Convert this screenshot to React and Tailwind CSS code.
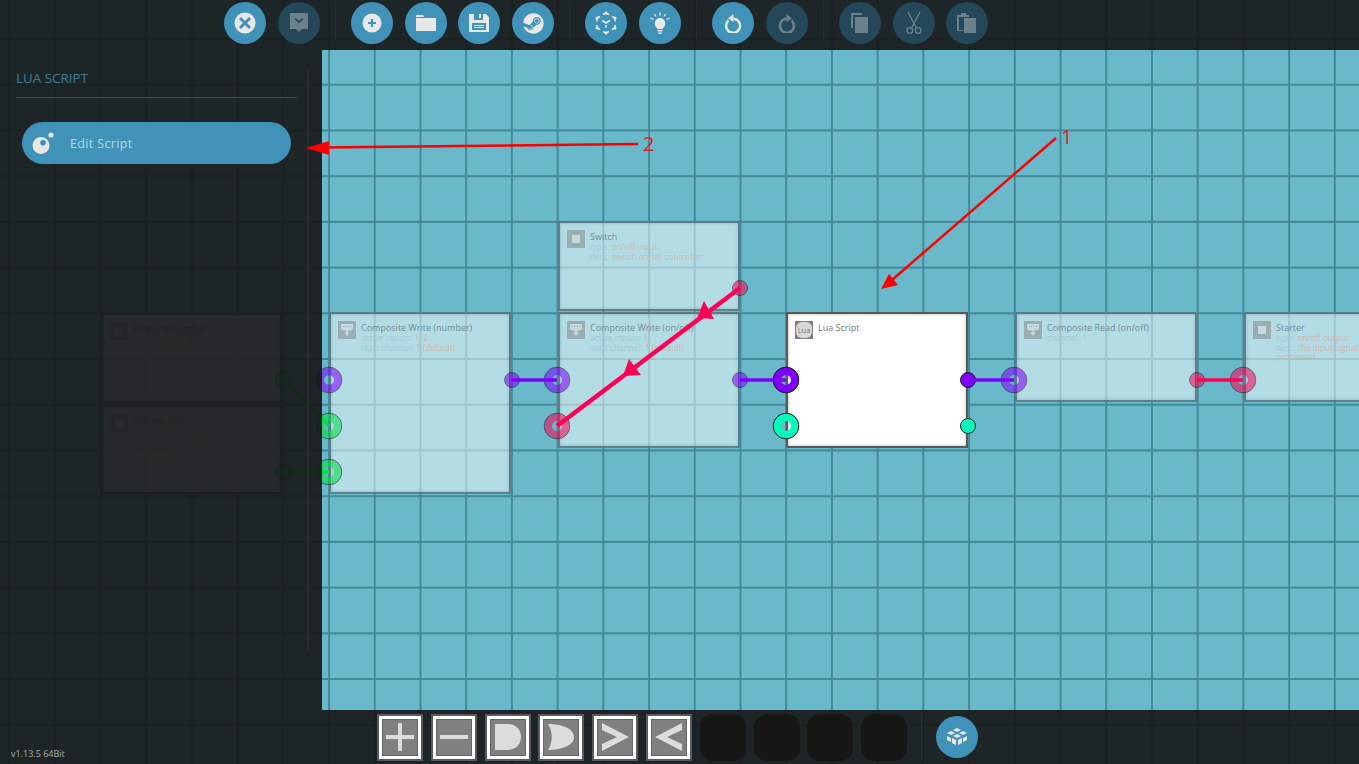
import { FaSteam } from 'react-icons/fa'

const PURPLE = '#7f00ff'
const PINK = '#ff0055'
const GREEN = '#00e040'
const TEAL = '#00ffbb'

const NODES = [
  { name: 'Property Number', box: 'left-[101px] top-[313px] w-[181px] h-[90px]', icon: 'square', lines: [['type:', 'number input'], ['value:', '0.000000']] },
  { name: 'Current RPS', box: 'left-[101px] top-[405px] w-[181px] h-[89px]', icon: 'square', lines: [['type:', 'number input'], ['desc:', 'the input signal to be'], ['', 'processed.']] },
  { name: 'Composite Write (number)', box: 'left-[329px] top-[312px] w-[182px] h-[182px]', icon: 'write', lines: [['active inputs:', '1, 2'], ['start channel:', '1 (default)']] },
  { name: 'Switch', box: 'left-[558px] top-[221px] w-[182px] h-[90px]', icon: 'square', lines: [['type:', 'on/off input'], ['desc:', 'switch on/off controller']] },
  { name: 'Composite Write (on/off)', box: 'left-[558px] top-[312px] w-[182px] h-[136px]', icon: 'write', lines: [['active inputs:', '1'], ['start channel:', '1 (default)']] },
  { name: 'Composite Read (on/off)', box: 'left-[1015px] top-[312px] w-[182px] h-[90px]', icon: 'read', lines: [['channel: 1', '']] },
  { name: 'Starter', box: 'left-[1244px] top-[312px] w-[182px] h-[90px]', icon: 'square', lines: [['type:', 'on/off output'], ['desc:', 'the input signal to be'], ['', 'processed.']] },
]

const DIM_PORTS = [
  [283, 380, GREEN, 'out'], [283, 472, GREEN, 'out'],
  [329, 380, PURPLE, 'in'], [329, 426, GREEN, 'in'], [329, 472, GREEN, 'in'], [512, 380, PURPLE, 'out'],
  [740, 288, PINK, 'out'],
  [557, 380, PURPLE, 'in'], [557, 426, PINK, 'in'], [740, 380, PURPLE, 'out'],
  [1014, 380, PURPLE, 'in'], [1197, 380, PINK, 'out'], [1243, 380, PINK, 'in'],
]

const LIVE_PORTS = [
  [786, 380, PURPLE, 'in'], [786, 426, TEAL, 'in'], [968, 380, PURPLE, 'out'], [968, 426, TEAL, 'out'],
]

const WIRES = [
  [283, 380, 329, 426, GREEN], [283, 472, 329, 472, GREEN],
  [512, 380, 557, 380, PURPLE], [740, 380, 786, 380, PURPLE], [968, 380, 1014, 380, PURPLE],
  [1197, 380, 1243, 380, PINK],
]

function NodeIcon({ kind }) {
  return (
    <div className="flex w-[18px] h-[18px] shrink-0 items-center justify-center bg-[#808080]">
      {kind === 'square' && <div className="w-[8px] h-[8px] bg-[#d8d8d8]" />}
      {kind !== 'square' && (
        <svg width="14" height="14" viewBox="0 0 14 14" fill="#d8d8d8">
          <path d="M1 1h12v5l-2 1.500H8v2h2l-3 3.500-3-3.500h2v-2H3L1 6z" />
          <path d="M3 3h1v1H3zM5 3h1v1H5zM8 3h1v1H8zM10 3h1v1h-1z" fill="#808080" />
        </svg>
      )}
    </div>
  )
}

function Node({ node }) {
  return (
    <div className={`absolute ${node.box} flex gap-[5px] overflow-hidden border-2 border-[#3a5a64]/70 bg-white/50 pl-[7px] pt-[7px] shadow-[inset_0_0_3px_rgba(40,70,80,0.3)]`}>
      <div className="opacity-50">
        <NodeIcon kind={node.icon} />
      </div>
      <div className="mt-[1px] whitespace-nowrap">
        <div className="text-[9px] leading-[11px] text-[#6f8f96]">{node.name}</div>
        {node.lines.map((line, i) => (
          <div key={i} className="text-[8.3px] leading-[9.500px] text-[#9fcbd4]">
            {line[0]} <span className="text-[#cdb9ae]">{line[1]}</span>
          </div>
        ))}
      </div>
    </div>
  )
}

function Port({ port }) {
  const [x, y, color, type] = port
  if (type === 'out') {
    return <circle cx={x} cy={y} r="7.5" fill={color} stroke="#1a1a1a" strokeWidth="1" />
  }
  return (
    <g>
      <circle cx={x} cy={y} r="9" fill="none" stroke={color} strokeWidth="8" />
      <circle cx={x} cy={y} r="12.8" fill="none" stroke="#1a1a1a" strokeWidth="1" />
    </g>
  )
}

function Canvas() {
  return (
    <div className="absolute inset-0 overflow-hidden bg-[#69b9ca] bg-[linear-gradient(to_right,#45899a_1.6px,transparent_1.6px),linear-gradient(to_bottom,#45899a_1.6px,transparent_1.6px)] bg-[size:45.72px_45.72px] bg-[position:8px_38px]">
      {NODES.map((node) => (
        <Node key={node.name} node={node} />
      ))}
      <div className="absolute left-[786px] top-[312px] flex h-[136px] w-[182px] gap-[5px] border-2 border-[#5a5a5a] bg-white pl-[7px] pt-[7px] text-[9px] leading-[11px] text-[#777] shadow-[inset_0_0_3px_rgba(0,0,0,0.35)]">
        <div className="flex h-[18px] w-[18px] items-center justify-center bg-[#808080]">
          <div className="flex h-[16px] w-[16px] items-center justify-center rounded-[6px] bg-[#d8d8d8] text-[7.500px] text-[#777]">Lua</div>
        </div>
        <div className="mt-[1px]">Lua Script</div>
      </div>
      <svg className="absolute inset-0" width="1359" height="764">
        <g opacity="0.55">
          {DIM_PORTS.map((p) => (
            <Port key={`${p[0]}-${p[1]}`} port={p} />
          ))}
        </g>
        {LIVE_PORTS.map((p) => (
          <Port key={`${p[0]}-${p[1]}`} port={p} />
        ))}
        {WIRES.map((w) => (
          <line key={`${w[0]}-${w[1]}`} x1={w[0]} y1={w[1]} x2={w[2]} y2={w[3]} stroke={w[4]} strokeWidth="3.500" />
        ))}
        <line x1="740" y1="288" x2="557" y2="426" stroke={PINK} strokeWidth="4.500" />
        <polygon points="697,318 714,319 704,301" fill={PINK} />
        <polygon points="623,376 641,375 629,359" fill={PINK} />
      </svg>
    </div>
  )
}

function Round({ dim, children }) {
  return (
    <div className={`flex h-[42px] w-[42px] shrink-0 items-center justify-center rounded-full ${dim ? 'bg-[#24485a] text-[#6d818a]' : 'bg-[#4192b8] text-[#e8e8e8]'}`}>
      {children}
    </div>
  )
}

const Sep = () => <div className="mx-[15px] h-[38px] w-px shrink-0 bg-[#2b2c2b]" />

function TopBar() {
  return (
    <div className="flex h-[50px] shrink-0 items-start bg-[#161515]/90 pl-[224px] pt-[2px]">
      <div className="flex gap-[11.800px]">
        <Round>
          <svg width="22" height="22" viewBox="0 0 22 22">
            <circle cx="11" cy="11" r="10.500" fill="currentColor" />
            <path d="M6 6l10 10M16 6L6 16" stroke="#4192b8" strokeWidth="3" />
          </svg>
        </Round>
        <Round dim>
          <svg width="20" height="22" viewBox="0 0 20 22" fill="currentColor">
            <path fillRule="evenodd" d="M1 1h18v16h-6l-3 3-3-3H1zM5.500 7l4.500 4.500L14.500 7l-1.500-1-3 3-3-3z" />
          </svg>
        </Round>
      </div>
      <Sep />
      <div className="flex gap-[11.800px]">
        <Round>
          <svg width="20" height="20" viewBox="0 0 20 20">
            <circle cx="10" cy="10" r="9.500" fill="currentColor" />
            <path d="M10 6v8M6 10h8" stroke="#4192b8" strokeWidth="2.200" />
          </svg>
        </Round>
        <Round>
          <svg width="20" height="18" viewBox="0 0 20 18" fill="currentColor">
            <path d="M0 1h7l1 2H0z" />
            <path d="M0 4h20v13H0z" />
          </svg>
        </Round>
        <Round>
          <svg width="20" height="20" viewBox="0 0 20 20" fill="currentColor">
            <path fillRule="evenodd" d="M0 1h17l3 3v15H0zM5 1v6h9V1h-2v4h-2V1zM3 10v7h14v-7zM5 12h10v1H5zM5 14h10v1H5z" />
          </svg>
        </Round>
        <Round>
          <FaSteam size={21} />
        </Round>
      </div>
      <Sep />
      <div className="flex gap-[11.800px]">
        <Round>
          <svg width="24" height="24" viewBox="0 0 24 24" fill="none" stroke="currentColor" strokeWidth="1.500">
            <path d="M9 3.500L12 2l3 1.500M18 5.500L21 7v3.500M21 14v3l-3 1.500M15 20.500L12 22l-3-1.500M6 18.500L3 17v-3M3 10.500V7l3-1.500" />
            <path d="M8 9.500l4 2.500 4-2.500M12 14v3" />
            <g fill="currentColor" stroke="none">
              <circle cx="12" cy="2" r="1.500" />
              <circle cx="21" cy="7" r="1.500" />
              <circle cx="21" cy="17" r="1.500" />
              <circle cx="12" cy="22" r="1.500" />
              <circle cx="3" cy="17" r="1.500" />
              <circle cx="3" cy="7" r="1.500" />
            </g>
          </svg>
        </Round>
        <Round>
          <svg width="24" height="24" viewBox="0 0 24 24" fill="currentColor" stroke="currentColor">
            <path d="M12 7a5.500 5.500 0 0 0-3.500 9.500c.6.6.8 1 .8 1.500h5.400c0-.5.2-.9.8-1.500A5.500 5.500 0 0 0 12 7z" strokeWidth="0" />
            <path d="M9.500 19.500h5M10 21h4M10.500 22.500h3" strokeWidth="1" fill="none" />
            <path d="M12 1.500v3M6.500 3l1.500 2.500M17.500 3L16 5.500M2.500 7l2.800 1.300M21.500 7l-2.800 1.300" strokeWidth="1.300" fill="none" />
          </svg>
        </Round>
      </div>
      <Sep />
      <div className="flex gap-[11.800px]">
        <Round>
          <svg width="18" height="20" viewBox="0 0 18 20" fill="none" stroke="currentColor" strokeWidth="2.500">
            <path d="M4.500 7.500a7 7 0 1 0 5-1.700" />
            <path d="M9.500 1L4 5.500l5.500 3.500z" fill="currentColor" stroke="none" />
          </svg>
        </Round>
        <Round dim>
          <svg width="18" height="20" viewBox="0 0 18 20" fill="none" stroke="currentColor" strokeWidth="2.500">
            <path d="M13.500 7.500a7 7 0 1 1-5-1.700" />
            <path d="M8.500 1L14 5.500 8.500 9z" fill="currentColor" stroke="none" />
          </svg>
        </Round>
      </div>
      <Sep />
      <div className="flex gap-[11.800px]">
        <Round dim>
          <svg width="18" height="20" viewBox="0 0 18 20" fill="currentColor">
            <path d="M0 0h11v2H2v13H0z" />
            <path d="M4 4h13v16H4z" />
          </svg>
        </Round>
        <Round dim>
          <svg width="16" height="24" viewBox="0 0 16 24" fill="none" stroke="currentColor" strokeWidth="1.300">
            <path d="M2 1l8.200 15.500M14 1L5.800 16.500" />
            <circle cx="3.800" cy="19.500" r="2.800" />
            <circle cx="12.200" cy="19.500" r="2.800" />
          </svg>
        </Round>
        <Round dim>
          <svg width="20" height="22" viewBox="0 0 20 22" fill="currentColor">
            <path fillRule="evenodd" d="M0 3h4V1h5v2h3v2H2v13h4v1H0z" />
            <path d="M7 6h12v15H7z" />
          </svg>
        </Round>
      </div>
    </div>
  )
}

function SidePanel() {
  return (
    <aside className="relative w-[322px] shrink-0 bg-[#161515]/90 pl-[16px] pt-[21px]">
      <div className="w-[281px] border-b border-[#454a4b] pb-[11px] text-[13.400px] leading-[15px] text-[#3c7c97]">LUA SCRIPT</div>
      <div className="ml-[6px] mt-[24px] flex h-[42px] w-[269px] items-center rounded-full bg-[#4192b8] pl-[9px] text-[12.500px] tracking-[0.35px] text-[#b7d6e4]">
        <svg width="24" height="24" viewBox="0 0 24 24" fill="#e8e8e8">
          <path fillRule="evenodd" d="M10 6a8.500 8.500 0 1 1 0 17 8.500 8.500 0 0 1 0-17zM12 9a2.800 2.800 0 1 0 0 5.600A2.800 2.800 0 0 0 12 9z" />
          <circle cx="20" cy="4" r="2.600" />
        </svg>
        <span className="ml-[15px] mt-[2px]">Edit Script</span>
      </div>
      <div className="absolute left-[307px] top-[20px] h-[580px] w-[2px] bg-[#2c2a28]" />
    </aside>
  )
}

function ChipButton({ children }) {
  return (
    <div className="h-[47px] w-[46px] shrink-0 border-2 border-[#5a5a5a] bg-white p-[3px]">
      <div className="flex h-full w-full items-center justify-center border border-[#666] bg-[#808080]">
        <svg width="32" height="32" viewBox="0 0 32 32" fill="#dcdcdc">
          {children}
        </svg>
      </div>
    </div>
  )
}

function BottomBar() {
  return (
    <div className="flex h-[54px] shrink-0 items-center bg-[#161515]/90">
      <div className="flex h-full w-[377px] shrink-0 items-end pb-[5px] pl-[11px] text-[9px] leading-[10px] text-[#a9acac]">v1.13.5 64Bit</div>
      <div className="flex gap-[7.800px]">
        <ChipButton><path d="M14 2h4v12h12v4H18v12h-4V18H2v-4h12z" /></ChipButton>
        <ChipButton><path d="M2 14h28v4H2z" /></ChipButton>
        <ChipButton><path d="M3 3h12c8 0 14 5 14 13s-6 13-14 13H3z" /></ChipButton>
        <ChipButton><path d="M3 3c15 0 26 5 26 13S18 29 3 29c5-8 5-18 0-26z" /></ChipButton>
        <ChipButton><path d="M3 2l27 14L3 30v-7l15-7L3 9z" /></ChipButton>
        <ChipButton><path d="M29 2L2 16l27 14v-7l-15-7 15-7z" /></ChipButton>
        <div className="h-[47px] w-[46px] shrink-0 rounded-[13px] bg-[#161715]" />
        <div className="h-[47px] w-[46px] shrink-0 rounded-[13px] bg-[#161715]" />
        <div className="h-[47px] w-[46px] shrink-0 rounded-[13px] bg-[#161715]" />
        <div className="h-[47px] w-[46px] shrink-0 rounded-[13px] bg-[#161715]" />
      </div>
      <div className="mx-[14px] h-[46px] w-px shrink-0 bg-[#2b2c2b]" />
      <Round>
        <svg width="22" height="18" viewBox="0 0 22 18" fill="currentColor">
          <path d="M11 0l4 2-4 2-4-2zM5 3l4 2-4 2-4-2zM17 3l4 2-4 2-4-2zM11 6l4 2-4 2-4-2z" />
          <path d="M1 8l4 2v4L1 12zM6 10l4 2v5l-4-2zM12 12l4-2v5l-4 2zM17 10l4-2v4l-4 2z" />
        </svg>
      </Round>
    </div>
  )
}

export default function App() {
  return (
    <div className="relative h-[764px] w-[1359px] overflow-hidden font-['Open_Sans',sans-serif]">
      <Canvas />
      <div className="relative flex h-full flex-col">
        <TopBar />
        <div className="flex min-h-0 flex-1">
          <SidePanel />
        </div>
        <BottomBar />
      </div>
      <svg className="pointer-events-none absolute inset-0" width="1359" height="764">
        <line x1="1056" y1="138" x2="892" y2="280" stroke="#ff0000" strokeWidth="2.500" />
        <polygon points="881,289 889,274 898,285" fill="#ff0000" />
        <line x1="638" y1="144" x2="318" y2="147.500" stroke="#ff0000" strokeWidth="2.500" />
        <polygon points="306,148 329,141 329,155" fill="#ff0000" />
      </svg>
      <span className="absolute left-[1061px] top-[124px] text-[20px] leading-[26px] text-[#e02020]">1</span>
      <span className="absolute left-[643px] top-[131px] text-[20px] leading-[26px] text-[#e02020]">2</span>
    </div>
  )
}
